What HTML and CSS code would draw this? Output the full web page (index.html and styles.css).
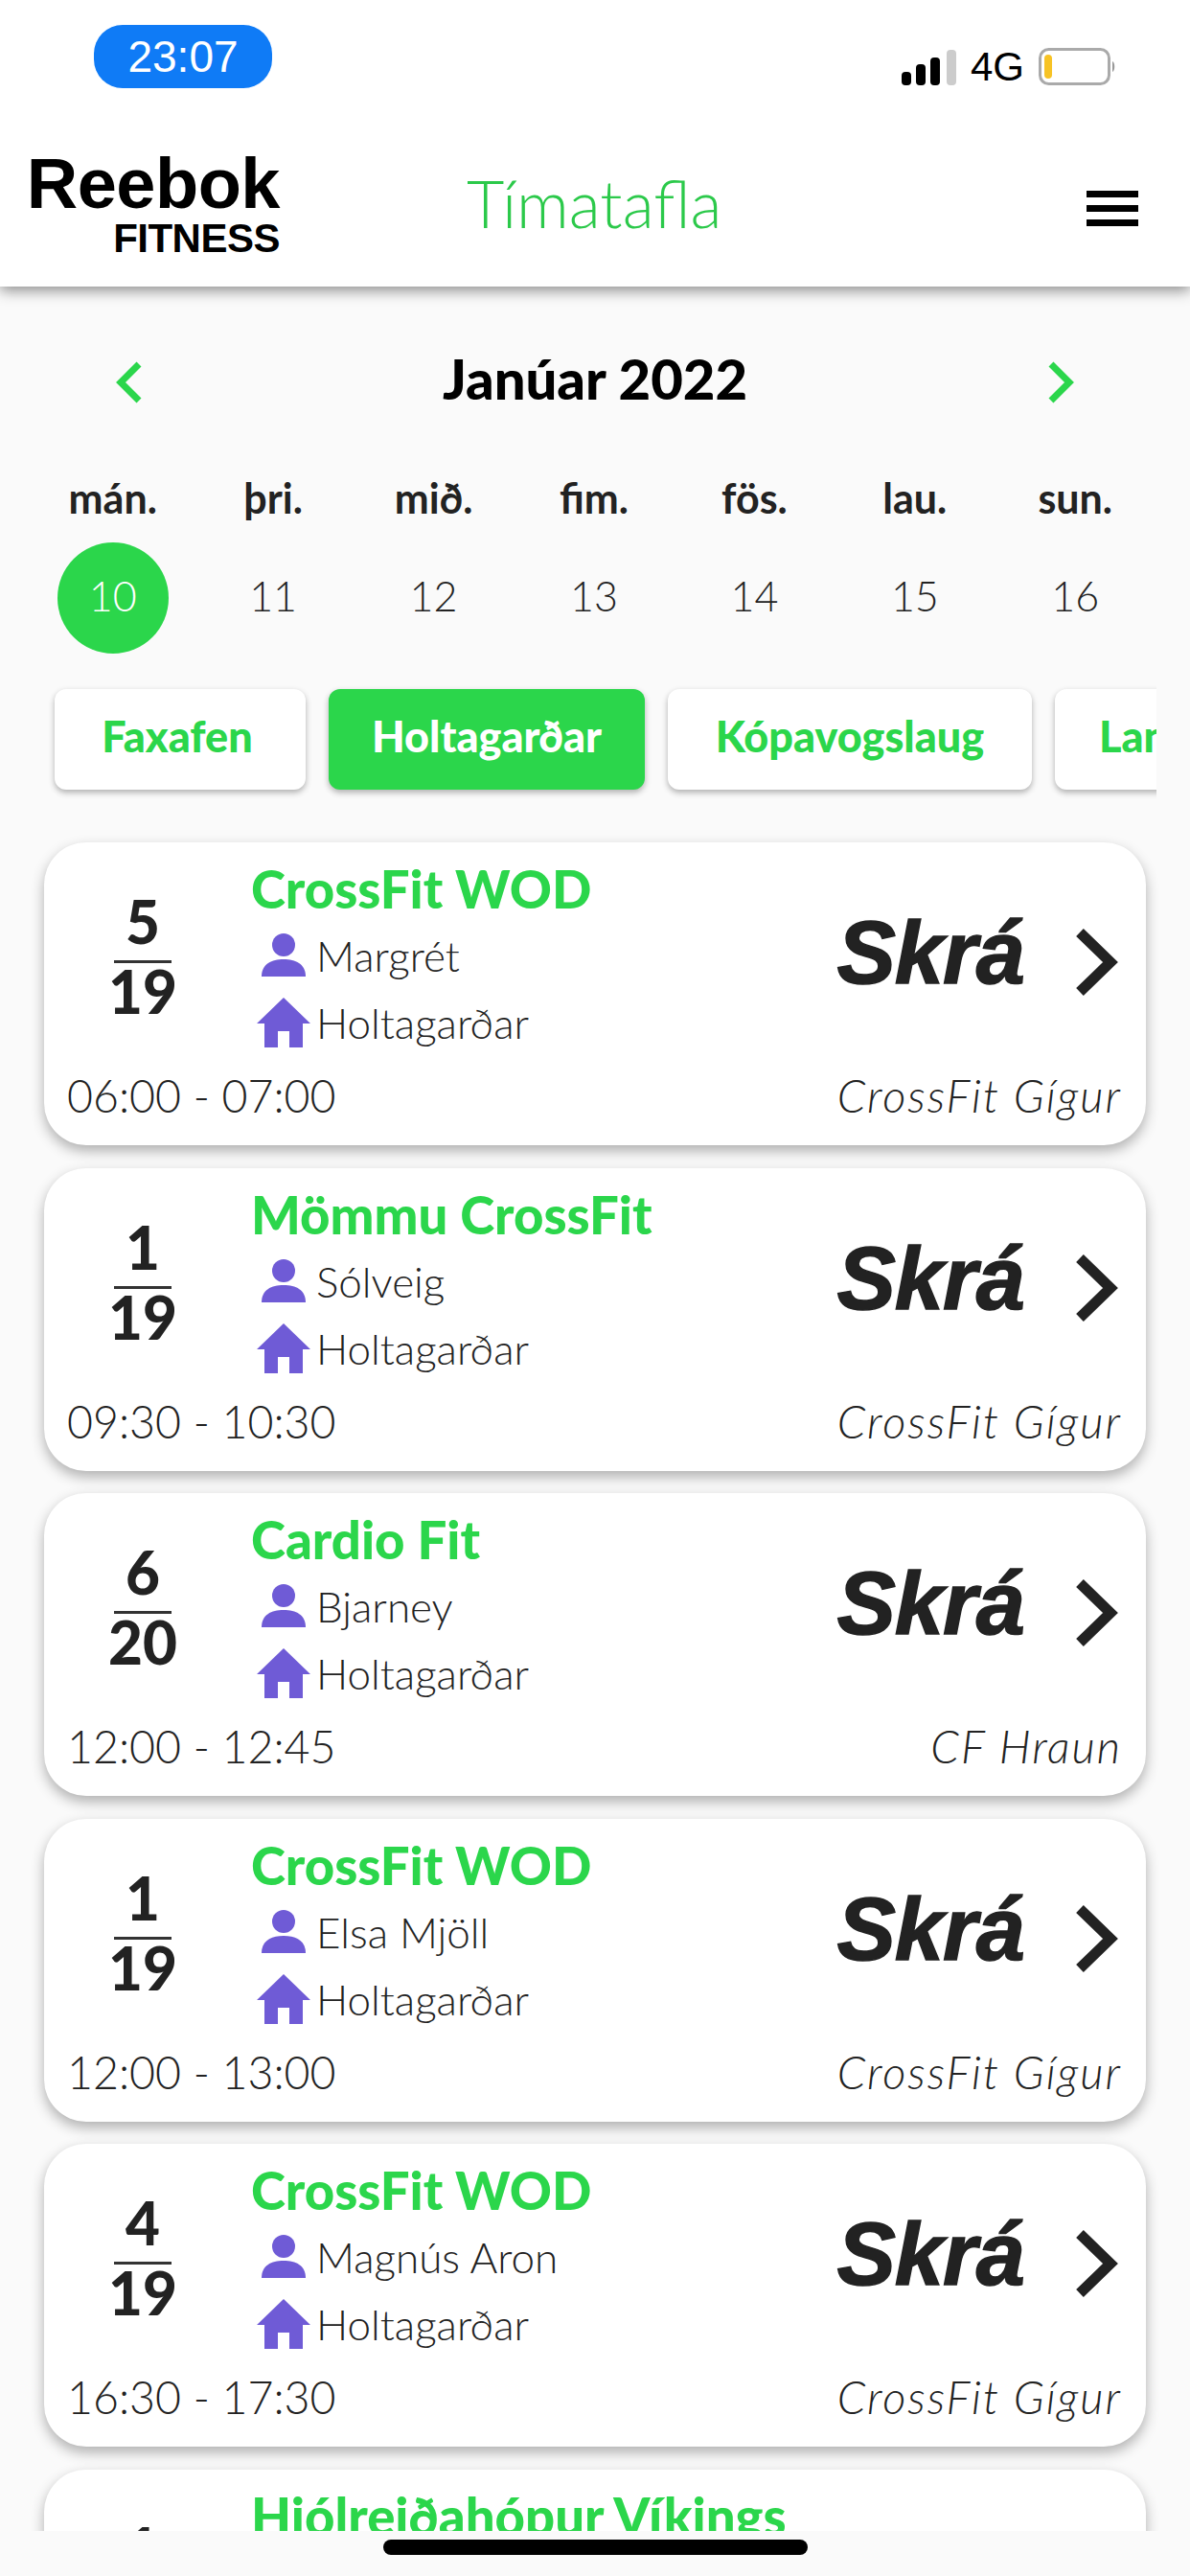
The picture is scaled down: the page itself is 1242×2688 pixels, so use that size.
FILE: index.html
```html
<!DOCTYPE html>
<html lang="is">
<head>
    <meta charset="UTF-8">
    <meta name="viewport" content="width=device-width, initial-scale=1.0">
    <title>Tímatafla</title>
    <link rel="stylesheet" href="styles.css">
</head>
<body>
<div class="page">
    <header class="top">
        <div class="status">
            <span class="clock">23:07</span>
            <div class="status-right">
                <svg class="signal" width="57" height="37" viewBox="0 0 57 37">
                    <rect x="0" y="23" width="10" height="14" rx="4" fill="#000"/>
                    <rect x="15" y="15" width="10" height="22" rx="4" fill="#000"/>
                    <rect x="30" y="8" width="10" height="29" rx="4" fill="#000"/>
                    <rect x="47" y="0" width="10" height="37" rx="4" fill="#ccc"/>
                </svg>
                <span class="net">4G</span>
                <svg class="battery" width="80" height="40" viewBox="0 0 80 40">
                    <rect x="1.5" y="1.5" width="72" height="36" rx="9" fill="#fff" stroke="#aaa" stroke-width="3"/>
                    <rect x="6" y="7" width="8" height="25" rx="4" fill="#f7c325"/>
                    <path d="M77 14c3 1 3 10 0 11z" fill="#999"/>
                </svg>
            </div>
        </div>
        <nav class="nav">
            <div class="logo">
                <span class="logo-main">Reebok</span>
                <span class="logo-sub">FITNESS</span>
            </div>
            <h1 class="nav-title">Tímatafla</h1>
            <div class="burger"><i></i><i></i><i></i></div>
        </nav>
    </header>

    <section class="month">
        <svg width="30" height="44" viewBox="0 0 30 44"><path d="M25 3 6 22l19 19" fill="none" stroke="#2bd64b" stroke-width="7"/></svg>
        <h2>Janúar 2022</h2>
        <svg width="30" height="44" viewBox="0 0 30 44"><path d="m5 3 19 19L5 41" fill="none" stroke="#2bd64b" stroke-width="7"/></svg>
    </section>

    <section class="week">
        <div class="day"><b>mán.</b><span class="num today">10</span></div>
        <div class="day"><b>þri.</b><span class="num">11</span></div>
        <div class="day"><b>mið.</b><span class="num">12</span></div>
        <div class="day"><b>fim.</b><span class="num">13</span></div>
        <div class="day"><b>fös.</b><span class="num">14</span></div>
        <div class="day"><b>lau.</b><span class="num">15</span></div>
        <div class="day"><b>sun.</b><span class="num">16</span></div>
    </section>

    <section class="tabs">
        <div class="tab t1">Faxafen</div>
        <div class="tab t2 active">Holtagarðar</div>
        <div class="tab t3">Kópavogslaug</div>
        <div class="tab t4">Langholt</div>
    </section>

    <main class="list" id="list"></main>

    <footer class="home"><div class="home-bar"></div></footer>
</div>

<script>
    // gögn fyrir tímana
    var classes = [
        ["5", "19", "CrossFit WOD", "Margrét", "06:00 - 07:00", "CrossFit Gígur"],
        ["1", "19", "Mömmu CrossFit", "Sólveig", "09:30 - 10:30", "CrossFit Gígur"],
        ["6", "20", "Cardio Fit", "Bjarney", "12:00 - 12:45", "CF Hraun"],
        ["1", "19", "CrossFit WOD", "Elsa Mjöll", "12:00 - 13:00", "CrossFit Gígur"],
        ["4", "19", "CrossFit WOD", "Magnús Aron", "16:30 - 17:30", "CrossFit Gígur"],
        ["1", "19", "Hjólreiðahópur Víkings", "Sólveig", "17:30 - 18:30", "CrossFit Gígur"]
    ];

    var personIcon = '<svg class="ico" width="50" height="50" viewBox="0 0 50 50"><circle cx="25" cy="14" r="12" fill="#6f5bd6"/><path d="M2 47c0-13 10-18 23-18s23 5 23 18z" fill="#6f5bd6"/></svg>';
    var houseIcon = '<svg class="ico" width="56" height="52" viewBox="0 0 56 52"><path d="M28 0 56 27H48V52H34V35H22V52H8V27H0z" fill="#6f5bd6"/></svg>';
    var arrow = '<svg class="go" width="46" height="72" viewBox="0 0 46 72"><path d="M5 5 37 36 5 67" fill="none" stroke="#222" stroke-width="11"/></svg>';

    var html = "";
    for (var i = 0; i < classes.length; i++) {
        var c = classes[i];
        html += '<article class="card"><div class="card-top">' +
            '<div class="frac"><span>' + c[0] + '</span><span class="den">' + c[1] + '</span></div>' +
            '<div class="info"><div class="name">' + c[2] + '</div>' +
            '<div class="row">' + personIcon + '<span>' + c[3] + '</span></div>' +
            '<div class="row">' + houseIcon + '<span>Holtagarðar</span></div></div>' +
            '<div class="action"><span class="skra">Skrá</span>' + arrow + '</div></div>' +
            '<div class="card-bottom"><span>' + c[4] + '</span><em>' + c[5] + '</em></div></article>';
    }
    document.getElementById("list").innerHTML = html;
</script>
</body>
</html>
```

FILE: styles.css
```css
body {
    margin: 0;
    background-color: #fafafa;
    font-family: Lato, "Noto Sans", sans-serif;
    color: #222;
}

.page {
    display: flex;
    flex-direction: column;
    height: 2688px;
    overflow: hidden;
}

/* toppur */
.top {
    height: 299px;
    flex: none;
    background-color: #fff;
    box-shadow: 0 4px 14px rgba(0, 0, 0, 0.45);
    position: relative;
}

.status {
    display: flex;
    justify-content: space-between;
    height: 130px;
    padding: 26px 78px 0 98px;
    box-sizing: border-box;
}

.clock {
    width: 186px;
    height: 66px;
    border-radius: 30px;
    background-color: #0f7bf6;
    color: #fff;
    font-family: "Liberation Sans", sans-serif;
    font-size: 46px;
    line-height: 66px;
    text-align: center;
}

.status-right {
    display: flex;
    align-items: center;
    gap: 15px;
    height: 38px;
    margin-top: 25px;
}

.net {
    font-family: "Liberation Sans", sans-serif;
    font-size: 42px;
    line-height: 38px;
    color: #000;
}

.nav {
    display: flex;
    align-items: center;
    height: 169px;
    padding: 0 54px 0 22px;
    position: relative;
}

.logo {
    display: flex;
    flex-direction: column;
    align-items: flex-end;
    width: 270px;
    color: #000;
    font-family: "Liberation Sans", sans-serif;
    font-weight: 700;
}

.logo-main {
    font-size: 74px;
    line-height: 68px;
    letter-spacing: -0.5px;
}

.logo-sub {
    font-size: 42px;
    line-height: 46px;
    letter-spacing: -0.5px;
}

.nav-title {
    margin: -6px 0 0 195px;
    font-size: 68px;
    font-weight: 300;
    color: #2bc94a;
}

.burger {
    margin-left: auto;
    display: flex;
    flex-direction: column;
    gap: 8px;
    margin-top: 6px;
}

.burger i {
    display: block;
    width: 54px;
    height: 7px;
    background-color: #000;
}

/* mánuður */
.month {
    display: flex;
    justify-content: space-between;
    align-items: center;
    height: 80px;
    padding: 0 120px;
    margin-top: 60px;
}

.month h2 {
    margin: -10px 0 0;
    font-size: 58px;
    font-weight: 900;
    color: #000;
}

.week {
    display: grid;
    grid-template-columns: repeat(7, 1fr);
    padding: 0 36px 0 34px;
    margin-top: 56px;
}

.day {
    display: flex;
    flex-direction: column;
    align-items: center;
    gap: 21px;
}

.day b {
    font-size: 43px;
    line-height: 50px;
    color: #222;
}

.num {
    width: 116px;
    height: 116px;
    border-radius: 50%;
    font-size: 43px;
    font-weight: 300;
    line-height: 112px;
    text-align: center;
}

.today {
    background-color: #2bd64b;
    color: #fff;
}

/* staðir */
.tabs {
    display: flex;
    gap: 24px;
    flex: none;
    width: 1207px;
    padding: 37px 0 14px 57px;
    box-sizing: border-box;
    overflow: hidden;
}

.tab {
    flex: none;
    height: 105px;
    box-sizing: border-box;
    border-radius: 12px;
    background-color: #fff;
    color: #2bd64b;
    box-shadow: 0 3px 6px rgba(0, 0, 0, 0.3);
    font-size: 45px;
    font-weight: 900;
    line-height: 98px;
    text-align: center;
}

.t1 { width: 262px; padding-right: 6px; }
.t2 { width: 330px; }
.t3 { width: 380px; }
.t4 { width: 330px; padding-left: 46px; text-align: left; }

.tab.active {
    background-color: #2bd64b;
    color: #fff;
}

/* tímar */
.list {
    flex: 1;
    min-height: 0;
    overflow: hidden;
    padding: 41px 46px 0;
    display: flex;
    flex-direction: column;
    gap: 23.6px;
}

.card {
    flex: none;
    height: 316px;
    box-sizing: border-box;
    background-color: #fff;
    border-radius: 44px;
    box-shadow: 0 6px 14px rgba(0, 0, 0, 0.3);
    padding: 0 28px 0 24px;
}

.card-top {
    display: flex;
    height: 238px;
}

.frac {
    width: 156px;
    margin: 42px 36px 0 0;
    padding-left: 2px;
    box-sizing: border-box;
    display: flex;
    flex-direction: column;
    align-items: center;
    font-size: 62px;
    font-weight: 900;
    line-height: 81px;
    color: #222;
}

.frac span {
    width: 60px;
    text-align: center;
}

/* 19 er breiðara en strikið, þarf að haldast miðjað */
.frac .den {
    display: flex;
    justify-content: center;
    border-top: 3px solid #333;
    line-height: 58px;
}

.info {
    flex: 1;
    min-width: 0;
    padding-top: 20px;
}

.name {
    font-size: 54.5px;
    font-weight: 900;
    line-height: 56px;
    color: #2bd64b;
    white-space: nowrap;
    margin-bottom: 7px;
}

.row {
    display: flex;
    align-items: center;
    height: 70px;
    font-size: 44px;
    font-weight: 300;
    color: #222;
    margin-left: 6px;
}

.row span {
    margin-left: 6px;
}

.ico {
    width: 56px;
    flex: none;
}

.action {
    display: flex;
    align-items: flex-start;
}

.skra {
    font-family: "Liberation Sans", sans-serif;
    font-size: 92px;
    font-weight: 700;
    font-style: italic;
    line-height: 92px;
    letter-spacing: -1px;
    color: #222;
    -webkit-text-stroke: 1.5px #222;
    margin: 69px 53px 0 0;
}

.go {
    margin-top: 89px;
}

.card-bottom {
    display: flex;
    justify-content: space-between;
    font-size: 46.5px;
    font-weight: 300;
    line-height: 52px;
}

.card-bottom em {
    font-size: 47px;
    letter-spacing: 2px;
    margin-right: -3px;
}

/* neðst */
.home {
    flex: none;
    height: 47px;
    background-color: #fafafa;
    position: relative;
}

.home-bar {
    width: 443px;
    height: 16px;
    margin: 9px auto 0;
    border-radius: 8px;
    background-color: #000;
}
```
